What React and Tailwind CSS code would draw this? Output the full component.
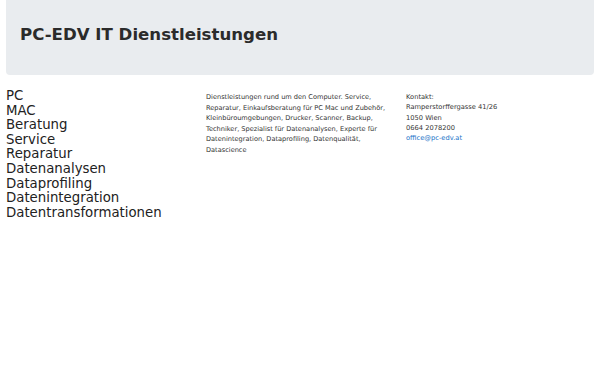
import React from 'react'

const FONT = { fontFamily: '"DejaVu Sans", sans-serif' }

const services = [
  'PC',
  'MAC',
  'Beratung',
  'Service',
  'Reparatur',
  'Datenanalysen',
  'Dataprofiling',
  'Datenintegration',
  'Datentransformationen',
]

export default function App() {
  return (
    <div className="min-h-screen bg-white text-[#212529]" style={FONT}>
      {/* Header */}
      <div className="mx-[6px] bg-[#e9ecef] rounded-b-[4px] h-[75px] flex items-center px-[14px] pb-[5px]">
        <h1 className="text-[16.6px] font-bold text-[#2b2b2b]">PC-EDV IT Dienstleistungen</h1>
      </div>

      <div className="grid grid-cols-3 pt-[14px]">
        <div className="pl-[6px]">
          {services.map((s) => (
            <div key={s} className="text-[13.3px] leading-[14.6px] text-[#222]">{s}</div>
          ))}
        </div>

        <div className="pl-[6px] pr-[8px] pt-[3px]">
          <p className="text-[6.6px] leading-[10.6px] text-[#333]">
            Dienstleistungen rund um den Computer. Service, Reparatur, Einkaufsberatung für PC Mac und Zubehör,
            Kleinbüroumgebungen, Drucker, Scanner, Backup, Techniker, Spezialist für Datenanalysen, Experte für
            Datenintegration, Dataprofiling, Datenqualität, Datascience
          </p>
        </div>

        <div className="pl-[6px] pt-[3px] text-[6.7px] leading-[10.3px] text-[#333]">
          <div>Kontakt:</div>
          <div>Ramperstorffergasse 41/26</div>
          <div>1050 Wien</div>
          <div>0664 2078200</div>
          <a href="#" className="text-[#1a73c8]">office@pc-edv.at</a>
        </div>
      </div>
    </div>
  )
}
